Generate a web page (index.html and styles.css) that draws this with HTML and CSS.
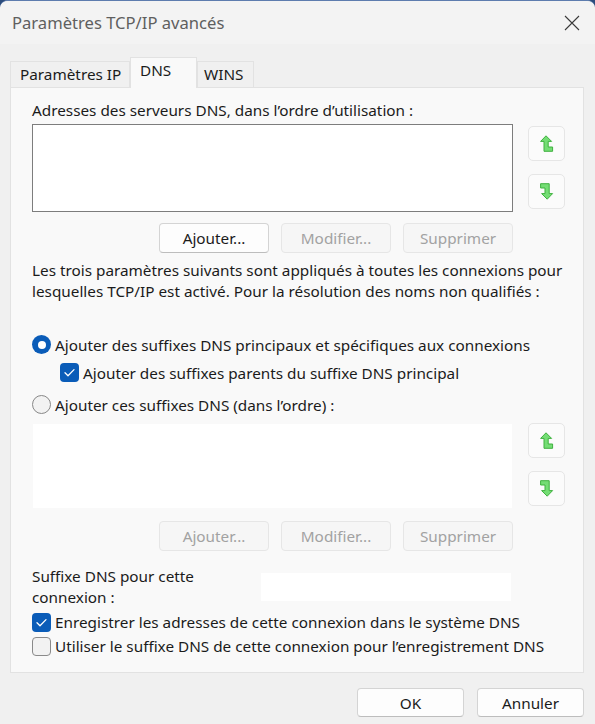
FILE: index.html
```html
<!DOCTYPE html>
<html lang="fr">
<head>
<meta charset="utf-8">
<title>Paramètres TCP/IP avancés</title>
<link rel="stylesheet" href="styles.css">
</head>
<body>
<div class="window">
  <header class="titlebar">
    <span class="title">Paramètres TCP/IP avancés</span>
    <svg class="close" width="16" height="16" viewBox="0 0 16 16"><path d="M1 1 L15 15 M15 1 L1 15" stroke="#3a3a3a" stroke-width="1.1" fill="none"/></svg>
  </header>
  <div class="tabs">
    <div class="tab tab-ip">Paramètres IP</div>
    <div class="tab tab-dns active">DNS</div>
    <div class="tab tab-wins">WINS</div>
  </div>
  <div class="panel">
    <div class="label">Adresses des serveurs DNS, dans l’ordre d’utilisation :</div>
    <div class="list-row">
      <div class="list"></div>
      <div class="arrows">
        <div class="arrow"><svg width="14" height="18" viewBox="0 0 14 18"><polygon points="6,0.8 11.6,6.4 8.2,6.4 8.2,12 12.6,12 12.6,16.3 4,16.3 4,6.4 0.6,6.4" fill="#74dd74" stroke="#3fb13f" stroke-width="1" stroke-linejoin="round"/></svg></div>
        <div class="arrow"><svg width="14" height="18" viewBox="0 0 14 18"><polygon points="6,0.8 11.6,6.4 8.2,6.4 8.2,12 12.6,12 12.6,16.3 4,16.3 4,6.4 0.6,6.4" fill="#74dd74" stroke="#3fb13f" stroke-width="1" stroke-linejoin="round" transform="rotate(180 6.6 8.5)"/></svg></div>
      </div>
    </div>
    <div class="btn-row">
      <button class="btn">Ajouter...</button>
      <button class="btn disabled">Modifier...</button>
      <button class="btn disabled">Supprimer</button>
    </div>
    <p class="note">Les trois paramètres suivants sont appliqués à toutes les connexions pour<br>lesquelles TCP/IP est activé. Pour la résolution des noms non qualifiés :</p>
    <div class="opt radio-opt first">
      <span class="radio on"></span>
      <span>Ajouter des suffixes DNS principaux et spécifiques aux connexions</span>
    </div>
    <div class="opt indent">
      <span class="check on"><svg width="19" height="19" viewBox="0 0 19 19"><path d="M5 9.8 L8 12.8 L14 6.6" stroke="#fff" stroke-width="1.3" fill="none" stroke-linecap="round" stroke-linejoin="round"/></svg></span>
      <span>Ajouter des suffixes parents du suffixe DNS principal</span>
    </div>
    <div class="opt radio-opt third">
      <span class="radio"></span>
      <span>Ajouter ces suffixes DNS (dans l’ordre) :</span>
    </div>
    <div class="list-row second">
      <div class="list off"></div>
      <div class="arrows flush">
        <div class="arrow"><svg width="14" height="18" viewBox="0 0 14 18"><polygon points="6,0.8 11.6,6.4 8.2,6.4 8.2,12 12.6,12 12.6,16.3 4,16.3 4,6.4 0.6,6.4" fill="#74dd74" stroke="#3fb13f" stroke-width="1" stroke-linejoin="round"/></svg></div>
        <div class="arrow"><svg width="14" height="18" viewBox="0 0 14 18"><polygon points="6,0.8 11.6,6.4 8.2,6.4 8.2,12 12.6,12 12.6,16.3 4,16.3 4,6.4 0.6,6.4" fill="#74dd74" stroke="#3fb13f" stroke-width="1" stroke-linejoin="round" transform="rotate(180 6.6 8.5)"/></svg></div>
      </div>
    </div>
    <div class="btn-row second">
      <button class="btn disabled">Ajouter...</button>
      <button class="btn disabled">Modifier...</button>
      <button class="btn disabled">Supprimer</button>
    </div>
    <div class="suffix-row">
      <div class="suffix-label">Suffixe DNS pour cette<br>connexion :</div>
      <div class="input"></div>
    </div>
    <div class="checks">
      <div class="opt tall">
        <span class="check on"><svg width="19" height="19" viewBox="0 0 19 19"><path d="M5 9.8 L8 12.8 L14 6.6" stroke="#fff" stroke-width="1.3" fill="none" stroke-linecap="round" stroke-linejoin="round"/></svg></span>
        <span>Enregistrer les adresses de cette connexion dans le système DNS</span>
      </div>
      <div class="opt tall">
        <span class="check"></span>
        <span>Utiliser le suffixe DNS de cette connexion pour l’enregistrement DNS</span>
      </div>
    </div>
  </div>
  <footer class="footer">
    <button class="btn dlg">OK</button>
    <button class="btn dlg">Annuler</button>
  </footer>
</div>
</body>
</html>
```
FILE: styles.css
```css
* { box-sizing: border-box; }
html, body { margin: 0; padding: 0; }
body {
  background: #2c4c7c;
  font-family: "Noto Sans", "Open Sans", sans-serif;
  font-size: 15.3px;
  color: #1b1b1b;
}
.window {
  width: 595px;
  height: 724px;
  background: #f0f0f0;
  border-radius: 8px 8px 0 0;
  border-top: 1px solid #5d7cae;
  overflow: hidden;
}
.titlebar {
  height: 43px;
  display: flex;
  align-items: center;
  justify-content: space-between;
  padding: 0 15px 0 12px;
  background: #f3f3f3;
}
.title {
  font-size: 16.6px;
  color: #5f5f5f;
}
.tabs {
  display: flex;
  align-items: flex-end;
  height: 30px;
  margin: 13px 0 0 10px;
}
.tab {
  height: 26px;
  line-height: 25px;
  border: 1px solid #e2e2e2;
  border-bottom: none;
  background: #f0f0f0;
  white-space: nowrap;
}
.tab-ip { width: 120px; padding-left: 9px; }
.tab-dns { width: 67px; padding-left: 9px; }
.tab-wins { width: 57px; padding-left: 6px; }
.tab.active {
  height: 31px;
  line-height: 25px;
  margin-bottom: -1px;
  background: #f9f9f9;
  position: relative;
  z-index: 1;
}
.panel {
  margin: 0 11px 0 10px;
  border: 1px solid #e2e2e2;
  background: #f9f9f9;
  padding: 12px 0 14px 21px;
}
.label { line-height: 21px; white-space: nowrap; }
.list-row {
  display: flex;
  margin-top: 3px;
}
.list-row.second { margin-top: 8px; }
.list {
  width: 481px;
  height: 88px;
  background: #fff;
  border: 1px solid #7d7d7d;
}
.list.off {
  height: 86px;
  border-color: transparent;
  background-clip: padding-box;
}
.arrows {
  display: flex;
  flex-direction: column;
  gap: 13px;
  margin: 2px 0 0 15px;
}
.arrows.flush { margin-top: 0; }
.arrow {
  width: 37px;
  height: 35px;
  background: #fbfbfb;
  border: 1px solid #e6e6e6;
  border-radius: 5px;
  display: flex;
  align-items: center;
  justify-content: center;
}
.btn-row {
  display: flex;
  justify-content: flex-end;
  gap: 12px;
  width: 481px;
  margin-top: 11px;
}
.btn-row.second { margin-top: 12px; }
.btn {
  width: 110px;
  height: 30px;
  padding: 0;
  font: inherit;
  color: #1b1b1b;
  background: #fdfdfd;
  border: 1px solid #d4d4d4;
  border-bottom-color: #bdbdbd;
  border-radius: 4px;
}
.btn.disabled {
  color: #a2a2a2;
  background: #f6f6f6;
  border-color: #e6e6e6;
}
.note {
  margin: 7px 0 0;
  line-height: 21px;
  white-space: nowrap;
}
.opt {
  display: flex;
  align-items: center;
  gap: 5px;
  height: 21px;
  white-space: nowrap;
}
.radio-opt { gap: 4px; }
.opt.first { margin-top: 32px; }
.opt.indent { margin-top: 7px; padding-left: 28px; gap: 4px; }
.opt.third { margin-top: 11px; }
.opt.tall { height: 24px; gap: 4px; }
.radio {
  width: 19px;
  height: 19px;
  border-radius: 50%;
  border: 1px solid #888;
  background: #f2f2f2;
  flex: none;
  display: flex;
  align-items: center;
  justify-content: center;
}
.radio.on {
  border: none;
  background: #0a5cb8;
}
.radio.on::after {
  content: "";
  width: 8px;
  height: 8px;
  border-radius: 50%;
  background: #fff;
}
.check {
  width: 19px;
  height: 19px;
  border-radius: 4px;
  border: 1px solid #8a8a8a;
  background: #f2f2f2;
  flex: none;
  display: flex;
}
.check.on {
  border: none;
  background: #0a5cb8;
}
.suffix-row {
  display: flex;
  margin-top: 15px;
}
.suffix-label {
  width: 229px;
  line-height: 21px;
}
.input {
  width: 250px;
  height: 28px;
  margin-top: 7px;
  background: #fff;
}
.checks { margin-top: 2px; }
.footer {
  display: flex;
  justify-content: flex-end;
  gap: 13px;
  padding: 15px 11px 0 0;
}
.btn.dlg {
  width: 107px;
  height: 29px;
}
```
